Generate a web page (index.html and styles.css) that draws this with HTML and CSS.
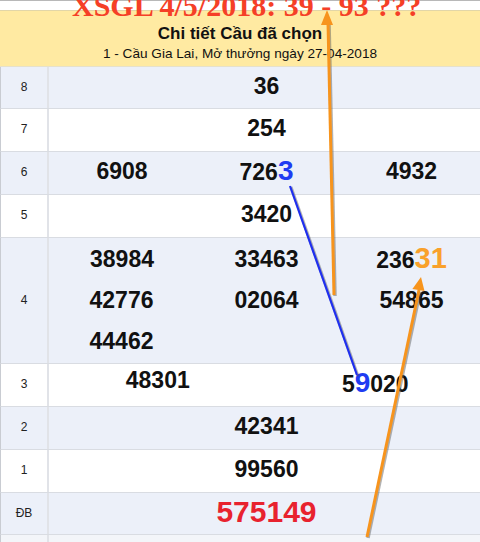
FILE: index.html
```html
<!DOCTYPE html>
<html>
<head>
<meta charset="utf-8">
<link rel="stylesheet" href="styles.css">
</head>
<body>
<div class="page">
  <div class="topbar"></div>
  <div class="head">
    <div class="head-title">Chi tiết Cầu đã chọn</div>
    <div class="head-sub">1 - Cầu Gia Lai, Mở thưởng ngày 27-04-2018</div>
  </div>
  <div class="row alt first">
    <div class="lbl">8</div>
    <div class="vals c1"><span>36</span></div>
  </div>
  <div class="row">
    <div class="lbl">7</div>
    <div class="vals c1"><span>254</span></div>
  </div>
  <div class="row alt">
    <div class="lbl">6</div>
    <div class="vals c3"><span>6908</span><span>726<b class="hl-blue">3</b></span><span>4932</span></div>
  </div>
  <div class="row">
    <div class="lbl">5</div>
    <div class="vals c1"><span>3420</span></div>
  </div>
  <div class="row alt tall">
    <div class="lbl">4</div>
    <div class="vals c3 multi">
      <span>38984</span><span>33463</span><span>236<b class="hl-orange">31</b></span>
      <span>42776</span><span>02064</span><span>54865</span>
      <span>44462</span>
    </div>
  </div>
  <div class="row">
    <div class="lbl">3</div>
    <div class="vals c2"><span class="up">48301</span><span>5<b class="hl-blue">9</b>020</span></div>
  </div>
  <div class="row alt">
    <div class="lbl">2</div>
    <div class="vals c1"><span>42341</span></div>
  </div>
  <div class="row">
    <div class="lbl">1</div>
    <div class="vals c1"><span>99560</span></div>
  </div>
  <div class="row alt last">
    <div class="lbl">ĐB</div>
    <div class="vals c1"><span class="special">575149</span></div>
  </div>
  <div class="row tail">
    <div class="lbl"></div>
    <div class="vals"></div>
  </div>

  <div class="big-title">XSGL 4/5/2018: 39 - 93 ???</div>

  <svg class="overlay" width="480" height="542" viewBox="0 0 480 542">
    <g stroke="#555" stroke-opacity="0.45" fill="none">
      <line x1="291" y1="187" x2="358" y2="376" stroke-width="3"/>
      <line x1="335" y1="296" x2="329" y2="22" stroke-width="3.5"/>
      <line x1="368" y1="538" x2="420" y2="292" stroke-width="3.5"/>
    </g>
    <line x1="290" y1="186" x2="357" y2="375" stroke="#1f2ff0" stroke-width="2.2"/>
    <line x1="334" y1="295" x2="328" y2="22" stroke="#f7941d" stroke-width="3"/>
    <polygon points="327,10 321,25 333,25" fill="#f7941d"/>
    <line x1="367" y1="537" x2="419" y2="290" stroke="#f7941d" stroke-width="3"/>
    <polygon points="421,277 412.4,289 424.5,291" fill="#f7941d"/>
  </svg>
</div>
</body>
</html>
```

FILE: styles.css
```css
html, body {
  margin: 0;
  padding: 0;
  overflow: hidden;
  background: #ffffff;
}
.page {
  position: relative;
  width: 484px;
  height: 542px;
  font-family: "Liberation Sans", Arial, sans-serif;
  color: #111;
}
.topbar {
  height: 11px;
  border-top: 1px solid #b8b8b8;
  box-sizing: border-box;
  background: #fff;
  border-bottom: 1px solid #e2d6a8;
}
.head {
  height: 56px;
  box-sizing: border-box;
  background: #ffeaa2;
  border-bottom: 1px solid #e6e1cc;
  display: flex;
  flex-direction: column;
  align-items: center;
  padding-right: 4px;
  padding-top: 13px;
}
.head-title {
  font-weight: bold;
  font-size: 17px;
  line-height: 20px;
}
.head-sub {
  font-size: 13.6px;
  line-height: 17px;
  margin-top: 1px;
  color: #111;
}
.row {
  display: grid;
  grid-template-columns: 48px 1fr;
  height: 43px;
  box-sizing: border-box;
  border-bottom: 1px solid #d9dce2;
  border-left: 1px solid #c9ccd2;
  background: #ffffff;
}
.row.alt { background: #ecf0f9; }
.row.first { height: 42px; }
.row.last { height: 42px; }
.row.tall { height: 126px; }
.row.tail { height: 12px; background: #f3f5f9; border-bottom: none; }
.lbl {
  border-right: 2px solid #e1e3e8;
  display: flex;
  align-items: center;
  justify-content: center;
  font-size: 12px;
  color: #222;
  padding-bottom: 2px;
  box-sizing: border-box;
}
.vals {
  display: grid;
  align-items: center;
  justify-items: center;
  font-weight: bold;
  font-size: 23px;
  padding-bottom: 4px;
  box-sizing: border-box;
}
.vals.c1 { grid-template-columns: 1fr; }
.vals.c2 { grid-template-columns: 1fr 1fr; }
.vals.c3 { grid-template-columns: 1fr 1fr 1fr; }
.vals.c3 span:first-child { margin-left: 1px; }
.vals.multi {
  grid-auto-rows: 41px;
  align-content: start;
  padding-top: 0;
  padding-bottom: 0;
}
.vals span { line-height: 26px; }
.vals .up { position: relative; top: -3px; }
.hl-blue {
  color: #1f3cf2;
  font-size: 28px;
}
.hl-orange {
  color: #f9a12b;
  font-size: 29px;
}
.special {
  color: #e8222e;
  font-size: 30px;
}
.big-title {
  position: absolute;
  left: 72px;
  top: -11px;
  font-family: "Liberation Serif", "Times New Roman", serif;
  font-weight: bold;
  font-size: 30px;
  line-height: 34px;
  color: #f53f27;
  white-space: nowrap;
}
.overlay {
  position: absolute;
  left: 0;
  top: 0;
}
```
